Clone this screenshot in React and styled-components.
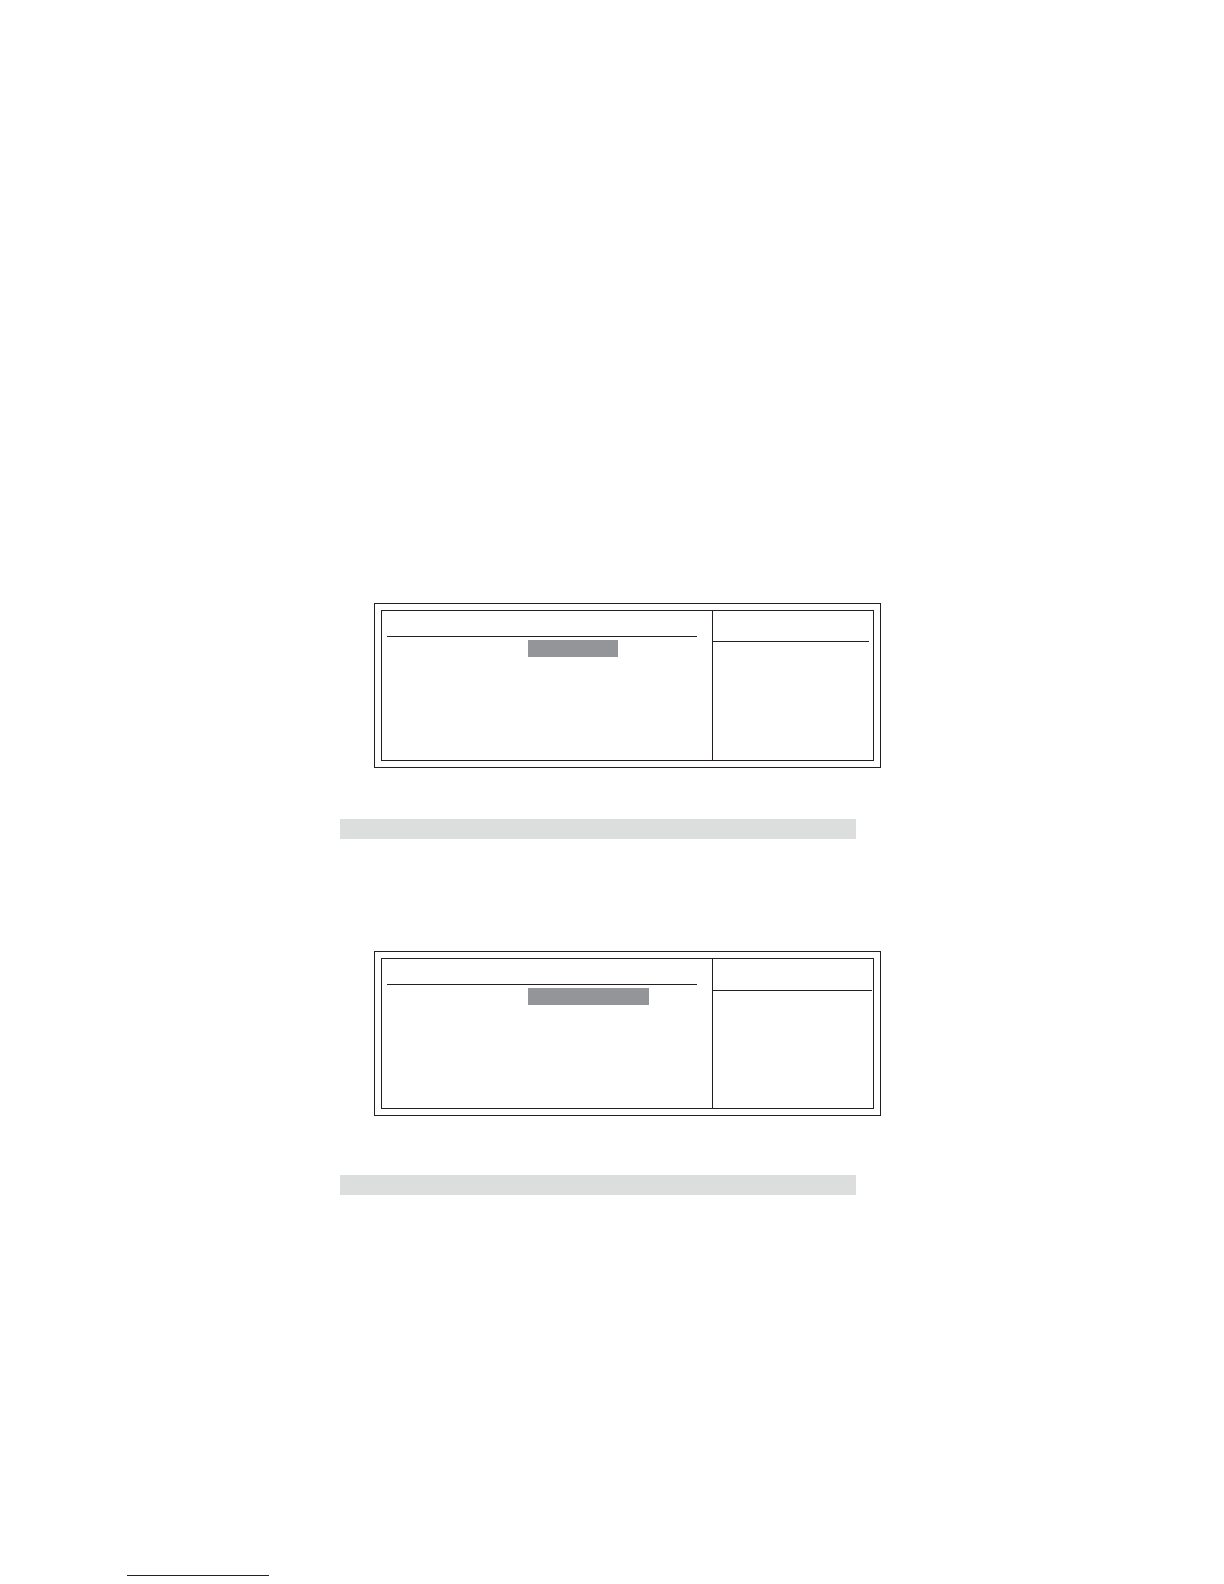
import React from 'react'
// css
import styled, { createGlobalStyle } from 'styled-components';

const screens = [
	{ id: 'first', fieldWidth: 90, helpHeight: 30, helpInset: 4, spaceAfter: 51 },
	{ id: 'second', fieldWidth: 121, helpHeight: 31, helpInset: 1, spaceAfter: 59 },
];

const SetupScreen = ({ fieldWidth, helpHeight, helpInset }) => (
	<StyledFrame>
		<StyledPanels>
			<StyledMenu>
				<StyledTitle $height={25}/>
				<StyledField $width={fieldWidth}/>
			</StyledMenu>
			<StyledHelp $inset={helpInset}>
				<StyledTitle $height={helpHeight}/>
			</StyledHelp>
		</StyledPanels>
	</StyledFrame>
);

const App = () => {
	return (
		<>
			<GlobalStyle/>
			<StyledPage>
				<StyledContent>
					{screens.map(({ id, spaceAfter, ...screen }) => (
						// each screen is followed by the shaded heading of the next section
						<StyledSection key={id} $gap={spaceAfter}>
							<SetupScreen {...screen}/>
							<StyledHeadingBar/>
						</StyledSection>
					))}
				</StyledContent>
				<StyledFooter>
					<StyledFooterRule/>
				</StyledFooter>
			</StyledPage>
		</>
	);
};

const GlobalStyle = createGlobalStyle`
	* {
		box-sizing: border-box;
	}

	body {
		margin: 0;
		background: #fff;
		font-family: "Liberation Sans", Arial, sans-serif;
	}
`;

const StyledPage = styled.div`
	display: flex;
	flex-direction: column;
	gap: 380px;
	padding: 603px 0 8px;
`;

const StyledContent = styled.main`
	display: flex;
	flex-direction: column;
	gap: 112px;
	padding-left: 340px;
`;

const StyledSection = styled.section`
	display: flex;
	flex-direction: column;
	gap: ${({ $gap }) => $gap}px;
`;

const StyledFrame = styled.div`
	width: 100%;
	max-width: 507px;
	margin-left: 34px;
	padding: 6px;
	border: 1px solid #231f20;
`;

const StyledPanels = styled.div`
	display: grid;
	grid-template-columns: 330fr 161fr;
	min-height: 151px;
	border: 1px solid #231f20;
`;

const StyledMenu = styled.div`
	display: flex;
	flex-direction: column;
	gap: 3px;
	padding: 0 15px 0 5px;
`;

const StyledHelp = styled.div`
	padding-right: ${({ $inset }) => $inset}px;
	border-left: 1px solid #231f20;
`;

const StyledTitle = styled.div`
	height: ${({ $height }) => $height + 1}px;
	border-bottom: 1px solid #231f20;
`;

const StyledField = styled.div`
	width: ${({ $width }) => $width}px;
	height: 17px;
	margin-left: 141px;
	background: #939598;
`;

const StyledHeadingBar = styled.div`
	width: 100%;
	max-width: 516px;
	height: 20px;
	background: #dcdddd;
`;

const StyledFooter = styled.footer`
	padding-left: 127px;
`;

const StyledFooterRule = styled.div`
	width: 142px;
	border-bottom: 1px solid #14148c;
`;

export default App;
